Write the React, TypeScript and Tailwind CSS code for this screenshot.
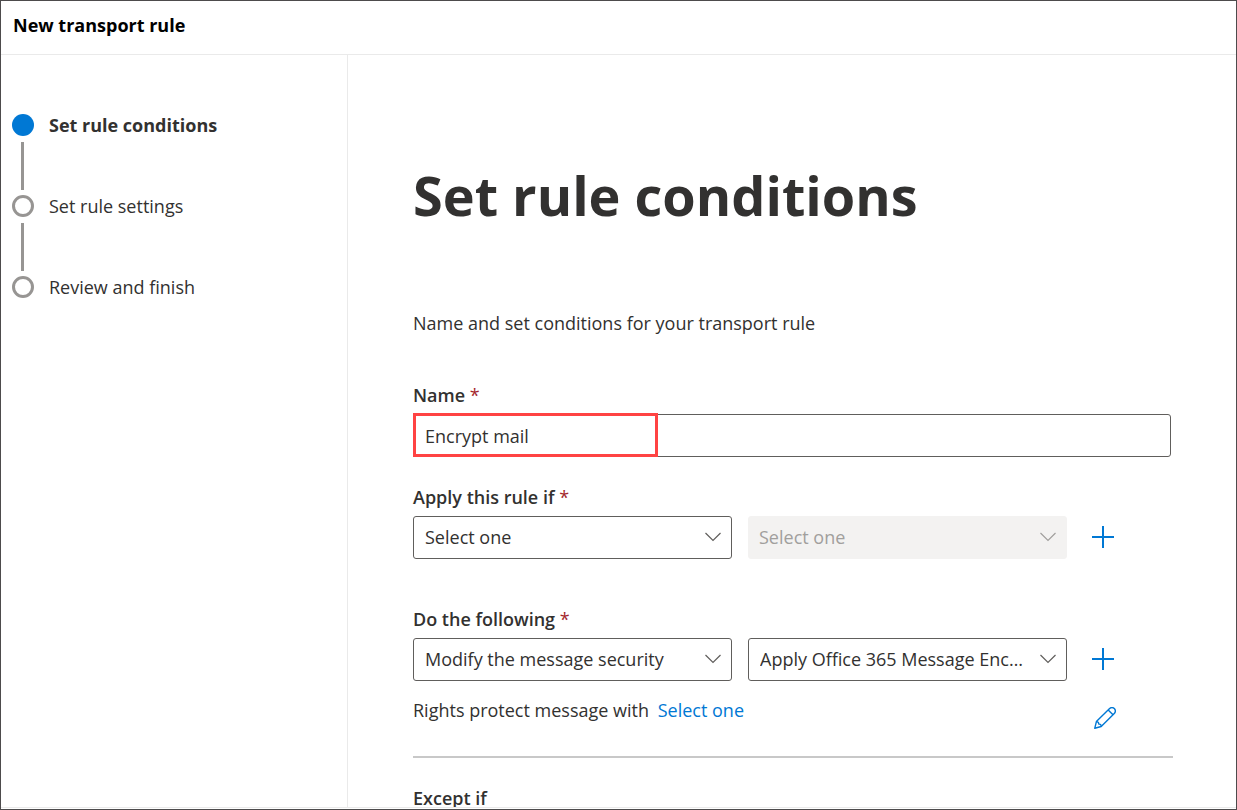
import React, { useId } from "react";

type StepState = "current" | "upcoming";

const steps: { label: string; state: StepState }[] = [
  { label: "Set rule conditions", state: "current" },
  { label: "Set rule settings", state: "upcoming" },
  { label: "Review and finish", state: "upcoming" },
];

function Chevron() {
  return (
    <svg
      viewBox="0 0 16 10"
      aria-hidden="true"
      className="pointer-events-none absolute top-4 right-[11px] h-2.5 w-4"
      fill="none"
      stroke="currentColor"
      strokeWidth="1.2"
    >
      <path d="M0.5 1 L8 8.5 L15.5 1" />
    </svg>
  );
}

function PlusIcon() {
  return (
    <svg viewBox="0 0 22 22" aria-hidden="true" className="size-[22px]" fill="currentColor">
      <path d="M10 0h2v10h10v2H12v10h-2V12H0v-2h10z" />
    </svg>
  );
}

function PencilIcon() {
  return (
    <svg
      viewBox="0 0 22 22"
      aria-hidden="true"
      className="size-[22px]"
      fill="none"
      stroke="currentColor"
      strokeWidth="1.4"
      strokeLinejoin="round"
    >
      <path d="M0.8 21.2 L2.4 14.6 L15.6 1.6 C17 0.3 19 0.3 20.3 1.6 C21.7 3 21.7 5 20.3 6.4 L7.2 19.5 Z" />
      <path d="M14.2 3 L19 7.8" />
      <path d="M2.4 14.6 C4.4 14.8 4.9 15.5 4.8 17.1 C6.4 17 7.1 17.6 7.2 19.5" />
    </svg>
  );
}

function FieldLabel({
  htmlFor,
  required,
  children,
}: {
  htmlFor: string;
  required?: boolean;
  children: React.ReactNode;
}) {
  return (
    <label htmlFor={htmlFor} className="block font-semibold">
      {children}
      {required && <span className="font-normal text-[#a4262c]"> *</span>}
    </label>
  );
}

function Dropdown({
  id,
  value,
  label,
  disabled,
}: {
  id: string;
  value: string;
  label?: string;
  disabled?: boolean;
}) {
  return (
    <div className={disabled ? "relative min-w-0 text-[#a19f9d]" : "relative min-w-0 text-[#605e5c]"}>
      <select
        id={id}
        aria-label={label}
        disabled={disabled}
        className={
          disabled
            ? "h-[43px] w-full appearance-none truncate rounded-[3px] border border-[#f3f2f1] bg-[#f3f2f1] pr-10 pb-0.5 pl-2.5 text-[#a19f9d] opacity-100"
            : "h-[43px] w-full appearance-none truncate rounded-[3px] border border-[#605e5c] bg-white pr-10 pb-0.5 pl-[11px] text-[#323130]"
        }
      >
        <option>{value}</option>
      </select>
      <Chevron />
    </div>
  );
}

function ConditionRow({
  id,
  label,
  first,
  second,
  secondLabel,
  secondDisabled,
}: {
  id: string;
  label: string;
  first: string;
  second: string;
  secondLabel: string;
  secondDisabled?: boolean;
}) {
  return (
    <div>
      <FieldLabel htmlFor={id} required>
        {label}
      </FieldLabel>
      <div className="mt-[7px] flex items-start gap-5 pr-[54px]">
        <div className="grid min-w-0 flex-1 grid-cols-2 gap-4">
          <Dropdown id={id} value={first} />
          <Dropdown id={id + "-detail"} value={second} label={secondLabel} disabled={secondDisabled} />
        </div>
        <button
          type="button"
          aria-label="Add"
          className="mt-[5px] grid size-8 shrink-0 place-items-center text-[#0078d4]"
        >
          <PlusIcon />
        </button>
      </div>
    </div>
  );
}

export default function App() {
  const uid = useId();
  return (
    <div className="flex h-screen flex-col overflow-hidden border border-[#4d4b4c] bg-white font-['Open_Sans','Noto_Sans',sans-serif] text-[18px] leading-6 text-[#323130]">
      <header className="border-b border-[#eaeaea] px-3 pt-3 pb-[17px]">
        <p className="font-bold text-black">New transport rule</p>
      </header>

      <div className="flex min-h-0 flex-1">
        <nav aria-label="Steps" className="w-[347px] shrink-0 border-r border-[#eaeaea] pt-[59px] pl-[11px]">
          <ol>
            {steps.map((step, i) => (
              <li key={step.label} className="flex gap-[15px]">
                <div className="flex w-[22px] flex-col">
                  <span
                    className={
                      step.state === "current"
                        ? "size-[22px] rounded-full bg-[#0078d4]"
                        : "size-[22px] rounded-full border-[3px] border-[#979593]"
                    }
                  />
                  {i < steps.length - 1 && <span className="mt-1.5 mb-[5px] ml-[9px] h-12 w-[3px] bg-[#979593]" />}
                </div>
                <span
                  className={step.state === "current" ? "leading-[22px] font-bold" : "leading-[22px]"}
                  aria-current={step.state === "current" ? "step" : undefined}
                >
                  {step.label}
                </span>
              </li>
            ))}
          </ol>
        </nav>

        <main className="min-w-0 flex-1 overflow-y-auto pt-[102px] pr-[63px] pl-[65px] [scrollbar-width:none]">
          <h1 className="text-[54px] leading-[76px] font-bold">Set rule conditions</h1>
          <p className="mt-[78px]">Name and set conditions for your transport rule</p>

          <form className="mt-12">
            <FieldLabel htmlFor={uid + "name"} required>
              Name
            </FieldLabel>
            <div className="relative mt-[7px] mr-0.5">
              <input
                id={uid + "name"}
                type="text"
                defaultValue="Encrypt mail"
                className="block h-[43px] w-full rounded-[3px] border border-[#605e5c] px-[11px]"
              />
              <div className="pointer-events-none absolute -top-px left-0 h-11 w-[245px] border-[3px] border-[#ff4343]" />
            </div>

            <div className="mt-7">
              <ConditionRow
                id={uid + "if"}
                label="Apply this rule if"
                first="Select one"
                second="Select one"
                secondLabel="Condition detail"
                secondDisabled
              />
            </div>

            <div className="mt-12">
              <ConditionRow
                id={uid + "do"}
                label="Do the following"
                first="Modify the message security"
                second="Apply Office 365 Message Encryption and rights protection"
                secondLabel="Action detail"
              />
            </div>

            <div className="mt-[17px] flex items-start justify-between pr-[52px]">
              <p>
                Rights protect message with{" "}
                <a href="#protect" className="ml-1 text-[#0078d4]">
                  Select one
                </a>
              </p>
              <button
                type="button"
                aria-label="Edit"
                className="mt-1 grid size-8 shrink-0 place-items-center text-[#0078d4]"
              >
                <PencilIcon />
              </button>
            </div>

            <hr className="mt-[22px] border-t-2 border-[#c8c8c8]" />

            <h2 className="mt-7 font-semibold">Except if</h2>
          </form>
        </main>
      </div>
      <footer className="h-0.5 shrink-0 border-t border-[#eaeaea]" />
    </div>
  );
}
